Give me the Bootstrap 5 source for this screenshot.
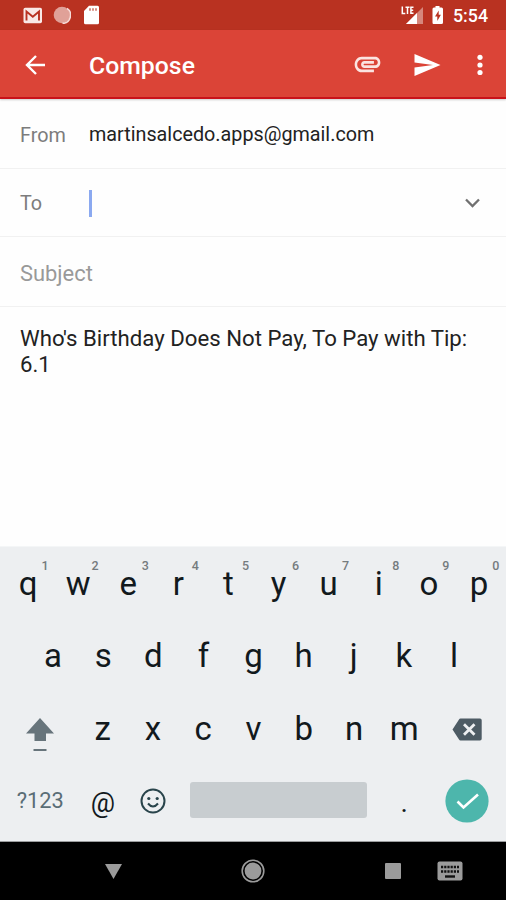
<!DOCTYPE html>
<html lang="en">
<head>
<meta charset="utf-8">
<meta name="viewport" content="width=device-width, initial-scale=1">
<title>Compose</title>
<link href="https://cdn.jsdelivr.net/npm/bootstrap@5.3.0/dist/css/bootstrap.min.css" rel="stylesheet">
<style>
body{font-family:Roboto,"Liberation Sans",sans-serif;line-height:1;color:#222}
svg{display:block;flex:none}
.screen{width:506px;height:900px;overflow:hidden;background:#fefefe}
.status-bar{height:30px;background:#b93221;padding:0 18px 0 23px}
.clock{font-size:17.8px;font-weight:500;margin-left:9px;padding-top:2px}
.app-bar{height:69px;background:#db4437;border-bottom:2px solid #c9121a;padding:2px 23px 0 24px;box-shadow:0 1px 2px rgba(0,0,0,.2);flex:none}
.app-title{font-size:24.8px;font-weight:500;margin-left:42px;padding-top:4px}
.icon-battery{margin-left:8px}
.icon-dot{margin-left:10px}
.icon-sd{margin-left:11px}
.icon-send{margin-left:33px}
.icon-more{margin-left:36px}
.field{border-bottom:1px solid #f1f1f1;padding:2px 25px 0 20px;flex:none}
.field-from{height:70px}
.field-to{height:68px;padding-top:1px}
.field-subject{height:70px;font-size:21.9px;color:#999;padding-top:4px}
.field-label{width:69px;font-size:19.8px;color:#7c7c7c;padding-top:2px}
.address{font-size:19.75px;padding-top:1px}
.caret{width:3px;height:27px;background:#8ba9f0}
.message{padding:18px 20px 0;font-size:22.2px;line-height:26px}
.keyboard{height:296px;background:#edeff1;padding:0 2px 0 3px;border-top:1px solid #f4f6f7;border-bottom:1px solid #9b9d9e;flex:none}
.key-row{height:72.3px}
.key-row-inset{padding:0 25px}
.key{flex:1 1 0;font-size:33px;color:#12191d;padding-top:1px}
.key-wide{flex:0 0 74.6px}
.key-hint{position:absolute;top:13px;left:38.500px;font-size:12.5px;font-weight:500;color:#757b7e}
.key-symbols{font-size:21.8px;color:#5a6d76}
.key-at{font-size:27px;padding-top:6px}
.key-dot{font-size:28px;padding-top:5px}
.icon-shift{margin-top:14px}
.icon-delete{margin-top:3px}
.key-space{flex:3.97 1 0}
.space-bar{height:36px;width:177px;background:#c8cdd0;border-radius:3px}
.nav-bar{height:58px;background:#000;padding-left:104px}
.icon-home{margin-left:118px}
.icon-recents{margin-left:120px}
.icon-keyboard{margin-left:36px}
</style>
<script src="https://cdn.jsdelivr.net/npm/bootstrap@5.3.0/dist/js/bootstrap.bundle.min.js"></script>
</head>
<body>
<div class="screen d-flex flex-column">
  <div class="status-bar d-flex align-items-center text-white flex-shrink-0">
    <svg width="20" height="17" viewBox="0 0 20 17"><rect x=".5" y=".8" width="18.5" height="15.5" rx="1.8" fill="#f9e9e6"/><path d="M3.5 13.5V4.500L9.800 9.700 16 4.500v9" fill="none" stroke="#b93221" stroke-width="1.900"/></svg>
    <svg class="icon-dot" width="18" height="18" viewBox="0 0 18 18"><circle cx="9" cy="9" r="8.300" fill="#e0a198"/><path d="M14 2.300A8.300 8.300 0 0 1 9.500 17.400" fill="none" stroke="#f6dcd8" stroke-width="1.600"/></svg>
    <svg class="icon-sd" width="18" height="20" viewBox="-1 0 18 20"><path d="M6 .8h8.500q1.500 0 1.500 1.500v15.400q0 1.500-1.500 1.500h-12q-1.500 0-1.500-1.500V6z" fill="#fff"/><path d="M7 3.200v2.600M10 3.200v2.600M13 3.200v2.600" stroke="#d07a6e" stroke-width="1.700"/></svg>
    <div class="ms-auto d-flex align-items-center">
      <svg width="23" height="20" viewBox="0 0 23 20"><path d="M1.300 1.500v7h3M4.500 2.200h4M6.500 2.200V9M12.500 2.200H9.900v6.100h2.600M10 5.200h2.200" fill="none" stroke="#fff" stroke-width="1.500"/><path d="M22 2v17H5z" fill="#d6877c"/><path d="M16 8v11H5z" fill="#fff"/></svg>
      <svg class="icon-battery" width="12" height="20" viewBox="0 0 12 20"><path d="M3.500 1h4v1.600h2q1.500 0 1.500 1.500v13.400q0 1.500-1.500 1.500h-8Q.5 19 .5 17.500V4.100Q.5 2.600 2 2.600h1.500z" fill="#fff"/><path d="M6.700 5.500L3 11.500h2.300v4.500l3.600-6.200H6.700z" fill="#b93221"/></svg>
      <span class="clock">5:54</span>
    </div>
  </div>
  <header class="app-bar d-flex align-items-center text-white position-relative">
    <svg width="23" height="22" viewBox="0 0 23 22"><path d="M21 11H3M12 2L3 11l9 9" fill="none" stroke="#fff" stroke-width="2.400"/></svg>
    <span class="app-title">Compose</span>
    <div class="ms-auto d-flex align-items-center">
      <svg width="27" height="17" viewBox="1.500 6.500 21 12" preserveAspectRatio="none"><path d="M2 12.500C2 9.460 4.460 7 7.500 7H18c2.210 0 4 1.790 4 4s-1.790 4-4 4H9.500C8.120 15 7 13.880 7 12.500S8.120 10 9.500 10H17v2H9.410c-.55 0-.55 1 0 1H18c1.100 0 2-.9 2-2s-.9-2-2-2H7.500C5.570 9 4 10.570 4 12.500S5.570 16 7.500 16H17v2H7.500C4.460 18 2 15.540 2 12.500z" fill="#fbe4e1"/></svg>
      <svg class="icon-send" width="27" height="24" viewBox="0 0 27 24"><path d="M.5 1l26 11L.5 23v-8.500L19 12 .5 9.500z" fill="#fff"/></svg>
      <svg class="icon-more" width="6" height="24" viewBox="0 0 6 24"><g fill="#fff"><circle cx="3" cy="4.300" r="2.600"/><circle cx="3" cy="12" r="2.600"/><circle cx="3" cy="19.500" r="2.600"/></g></svg>
    </div>
  </header>
  <div class="field field-from d-flex align-items-center"><span class="field-label">From</span><span class="address">martinsalcedo.apps@gmail.com</span></div>
  <div class="field field-to d-flex align-items-center"><span class="field-label">To</span><span class="caret"></span>
    <svg class="ms-auto" width="18" height="12" viewBox="0 0 18 12"><path d="M3 2.500l6.500 6.500L16 2.500" fill="none" stroke="#707070" stroke-width="2.300"/></svg></div>
  <div class="field field-subject d-flex align-items-center">Subject</div>
  <main class="message flex-grow-1">Who's Birthday Does Not Pay, To Pay with Tip: 6.1</main>
  <div class="keyboard">
    <div class="key-row d-flex">
      <div class="key d-flex align-items-center justify-content-center position-relative">q<span class="key-hint">1</span></div>
      <div class="key d-flex align-items-center justify-content-center position-relative">w<span class="key-hint">2</span></div>
      <div class="key d-flex align-items-center justify-content-center position-relative">e<span class="key-hint">3</span></div>
      <div class="key d-flex align-items-center justify-content-center position-relative">r<span class="key-hint">4</span></div>
      <div class="key d-flex align-items-center justify-content-center position-relative">t<span class="key-hint">5</span></div>
      <div class="key d-flex align-items-center justify-content-center position-relative">y<span class="key-hint">6</span></div>
      <div class="key d-flex align-items-center justify-content-center position-relative">u<span class="key-hint">7</span></div>
      <div class="key d-flex align-items-center justify-content-center position-relative">i<span class="key-hint">8</span></div>
      <div class="key d-flex align-items-center justify-content-center position-relative">o<span class="key-hint">9</span></div>
      <div class="key d-flex align-items-center justify-content-center position-relative">p<span class="key-hint">0</span></div>
    </div>
    <div class="key-row key-row-inset d-flex">
      <div class="key d-flex align-items-center justify-content-center">a</div>
      <div class="key d-flex align-items-center justify-content-center">s</div>
      <div class="key d-flex align-items-center justify-content-center">d</div>
      <div class="key d-flex align-items-center justify-content-center">f</div>
      <div class="key d-flex align-items-center justify-content-center">g</div>
      <div class="key d-flex align-items-center justify-content-center">h</div>
      <div class="key d-flex align-items-center justify-content-center">j</div>
      <div class="key d-flex align-items-center justify-content-center">k</div>
      <div class="key d-flex align-items-center justify-content-center">l</div>
    </div>
    <div class="key-row d-flex">
      <div class="key key-wide d-flex align-items-center justify-content-center"><svg class="icon-shift" width="28" height="36" viewBox="0 0 28 36"><path d="M14 1l14 15.500h-8V24H8.500v-7.500H0z" fill="#67747b"/><path d="M7.500 33h13" stroke="#67747b" stroke-width="2"/></svg></div>
      <div class="key d-flex align-items-center justify-content-center">z</div>
      <div class="key d-flex align-items-center justify-content-center">x</div>
      <div class="key d-flex align-items-center justify-content-center">c</div>
      <div class="key d-flex align-items-center justify-content-center">v</div>
      <div class="key d-flex align-items-center justify-content-center">b</div>
      <div class="key d-flex align-items-center justify-content-center">n</div>
      <div class="key d-flex align-items-center justify-content-center">m</div>
      <div class="key key-wide d-flex align-items-center justify-content-center"><svg class="icon-delete" width="30" height="23" viewBox="0 0 30 23"><path d="M8.500.5H28q1.700 0 1.700 1.700v18.600q0 1.700-1.700 1.700H8.500Q7.500 22.500 7 21.500L.5 11.500 7 1.500Q7.500.5 8.500.5z" fill="#4d5b64"/><path d="M12 6.200l10.500 10.500M22.500 6.200L12 16.700" stroke="#edeff1" stroke-width="2.800"/></svg></div>
    </div>
    <div class="key-row d-flex">
      <div class="key key-wide key-symbols d-flex align-items-center justify-content-center">?123</div>
      <div class="key key-at d-flex align-items-center justify-content-center">@</div>
      <div class="key d-flex align-items-center justify-content-center"><svg width="26" height="26" viewBox="0 0 26 26"><circle cx="13" cy="13" r="11.500" fill="none" stroke="#29444b" stroke-width="2"/><circle cx="8.800" cy="10.500" r="1.600" fill="#29444b"/><circle cx="17.200" cy="10.500" r="1.600" fill="#29444b"/><path d="M8 15.500q5 6 10 0" fill="none" stroke="#29444b" stroke-width="2"/></svg></div>
      <div class="key-space d-flex align-items-center justify-content-center"><div class="space-bar"></div></div>
      <div class="key key-dot d-flex align-items-center justify-content-center">.</div>
      <div class="key key-wide d-flex align-items-center justify-content-center"><svg width="44" height="44" viewBox="0 0 44 44"><circle cx="22" cy="22" r="21.600" fill="#4db6ac"/><path d="M12.500 22.500l6 6L33 15.500" fill="none" stroke="#fff" stroke-width="2.600"/></svg></div>
    </div>
  </div>
  <div class="nav-bar d-flex align-items-center flex-shrink-0">
    <svg width="19" height="17" viewBox="0 0 19 17"><path d="M1 1h17L9.500 16z" fill="#9b9b9b"/></svg>
    <svg class="icon-home" width="24" height="24" viewBox="0 0 24 24"><circle cx="12" cy="12" r="10.800" fill="none" stroke="#9b9b9b" stroke-width="1.600"/><circle cx="12" cy="12" r="8.400" fill="#9b9b9b"/></svg>
    <svg class="icon-recents" width="16" height="16" viewBox="0 0 16 16"><rect width="16" height="16" rx="1" fill="#9b9b9b"/></svg>
    <svg class="icon-keyboard" width="26" height="20" viewBox="0 0 26 20"><rect x=".5" y=".5" width="25" height="19" rx="2" fill="#9b9b9b"/><path d="M4 6h18M4 10.500h18" stroke="#111" stroke-width="2.400" stroke-dasharray="2.200 1"/><path d="M8 15.500h10" stroke="#111" stroke-width="2.400"/></svg>
  </div>
</div>
</body>
</html>
